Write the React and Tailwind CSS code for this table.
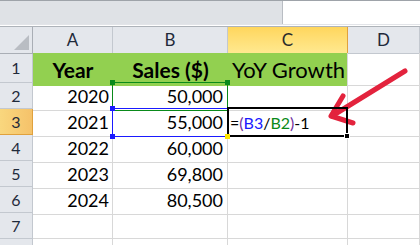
const cols = ["A", "B", "C", "D"];

const rows = [
  { n: 1, head: true },
  { n: 2, year: "2020", sales: "50,000" },
  { n: 3, year: "2021", sales: "55,000" },
  { n: 4, year: "2022", sales: "60,000" },
  { n: 5, year: "2023", sales: "69,800" },
  { n: 6, year: "2024", sales: "80,500" },
  { n: 7 },
  { n: 8 },
];

const grid = "grid grid-cols-[33px_80px_115px_120px_1fr]";

function RowHeader({ n, active, tall }) {
  return (
    <div
      className={`${tall ? "h-[30px]" : "h-[26px]"} flex items-center justify-center border-r border-b text-[16px] text-[#1f2a3a] ${
        active
          ? "bg-gradient-to-r from-[#f9d77e] to-[#f5c26a] border-[#e0a13d]"
          : "bg-[#e4e7ec] border-[#c3c8cf]"
      }`}
    >
      {n}
    </div>
  );
}

function Cell({ children, className = "" }) {
  return (
    <div className={`relative h-full border-r border-b border-[#d8d8d8] ${className}`}>
      {children}
    </div>
  );
}

function Handle({ className }) {
  return <span className={`absolute w-[5px] h-[5px] z-20 ${className}`} />;
}

export default function App() {
  return (
    <div className="w-[420px] h-[245px] overflow-hidden bg-white font-['Lato','Liberation_Sans',sans-serif] relative">
      <div className="flex h-[24px] border-t border-[#9ea3a9]">
        <div className="w-[283px] bg-[#dfe2e6] border-r border-[#b9bdc3]" />
        <div className="flex-1 bg-white" />
      </div>
      <div className="h-[2px] bg-white border-t border-[#e2e4e8]" />
      <div className="h-[1px] bg-[#aeb3b9]" />

      <div className={`${grid} h-[26px]`}>
        <div className="relative bg-[#e4e7ec] border-r border-b border-[#a9aeb5]">
          <span className="absolute right-[3px] bottom-[3px] w-0 h-0 border-l-[15px] border-l-transparent border-b-[15px] border-b-[#b9bdc3]" />
        </div>
        {cols.map((c) => (
          <div
            key={c}
            className={`flex items-center justify-center text-[17px] border-r border-b ${
              c === "C"
                ? "bg-gradient-to-b from-[#ffd65c] to-[#ffe98f] border-[#e0a13d] text-[#2b2b2b]"
                : "bg-[#e4e7ec] border-[#c3c8cf] text-[#1f2a3a]"
            }`}
          >
            {c}
          </div>
        ))}
      </div>

      {rows.map((r) => (
        <div key={r.n} className={`${grid} ${r.head ? "h-[30px]" : "h-[26px]"}`}>
          <RowHeader n={r.n} active={r.n === 3} tall={r.head} />
          {r.head ? (
            <>
              <div className="bg-[#92d050] flex items-center justify-center text-[21px] font-bold text-black">Year</div>
              <div className="bg-[#92d050] flex items-center justify-center text-[21px] font-bold text-black">Sales ($)</div>
              <div className="bg-[#92d050] border-r border-[#d8d8d8] flex items-center pl-[4px] text-[22px] text-black">YoY Growth</div>
              <Cell />
            </>
          ) : (
            <>
              <Cell className="flex items-center justify-end pr-[3px] text-[18px] text-black">{r.year}</Cell>
              <Cell className="flex items-center justify-end pr-[4px] text-[18px] text-black">
                {r.n === 2 && (
                  <>
                    <span className="absolute -left-[1px] -top-[1px] -right-[1px] -bottom-[1px] border border-[#0a8a1a] z-10" />
                    <Handle className="bg-[#0a8a1a] -left-[3px] -top-[3px]" />
                    <Handle className="bg-[#0a8a1a] -right-[3px] -top-[3px]" />
                  </>
                )}
                {r.n === 3 && (
                  <>
                    <span className="absolute -left-[1px] -top-[1px] -right-[1px] -bottom-[1px] border border-[#1a1aff] z-10" />
                    <Handle className="bg-[#1a1aff] -left-[3px] -top-[3px]" />
                    <Handle className="bg-[#1a1aff] -left-[3px] -bottom-[3px]" />
                    <Handle className="bg-[#ffe600] -right-[3px] -bottom-[3px]" />
                  </>
                )}
                {r.sales}
              </Cell>
              <Cell className="flex items-center pl-[2px] text-[16px] text-black">
                {r.n === 3 && (
                  <>
                    <span className="absolute -left-[1px] -top-[2px] -right-[1px] -bottom-[1px] border-2 border-black z-10" />
                    <span className="absolute -right-[3px] -bottom-[3px] w-[6px] h-[6px] bg-black border border-white z-20" />
                    <span>
                      =<span className="text-[#7030a0]">(</span>
                      <span className="text-[#1a1aff]">B3</span>/
                      <span className="text-[#0a8a1a]">B2</span>
                      <span className="text-[#7030a0]">)</span>-1
                    </span>
                  </>
                )}
              </Cell>
              <Cell />
            </>
          )}
        </div>
      ))}

      <svg className="absolute left-0 top-0 pointer-events-none" width="420" height="245">
        <g stroke="#e3233d" strokeWidth="5" strokeLinecap="round" strokeLinejoin="round" fill="none">
          <path d="M405 71 L332 116" />
          <path d="M343 96 L331 116 L353 123" />
        </g>
      </svg>
    </div>
  );
}
